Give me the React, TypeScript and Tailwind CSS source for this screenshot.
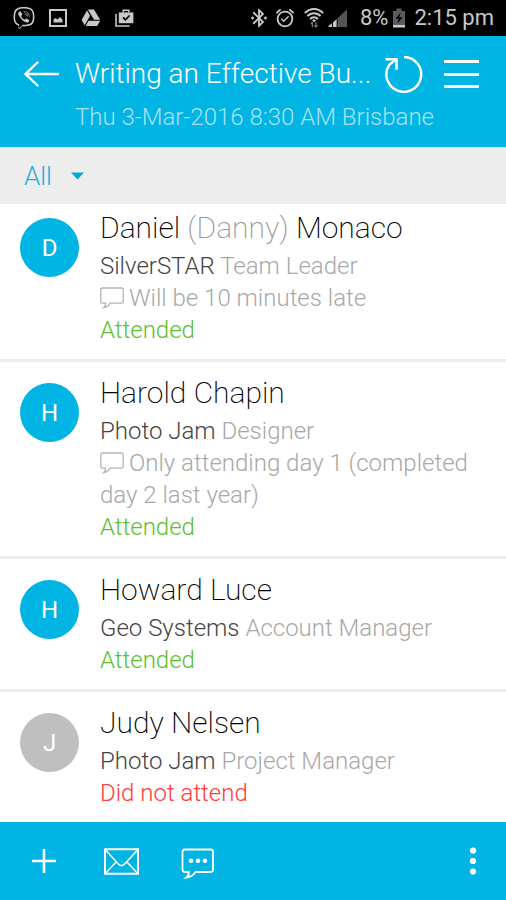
import React from 'react';
import { FaViber } from 'react-icons/fa';
import { MdAlarmOn, MdBluetoothConnected } from 'react-icons/md';

interface Attendee {
  first: string;
  nickname?: string;
  last: string;
  company: string;
  role: string;
  note?: string;
  attended: boolean;
}

const attendees: Attendee[] = [
  {
    first: 'Daniel',
    nickname: 'Danny',
    last: 'Monaco',
    company: 'SilverSTAR',
    role: 'Team Leader',
    note: 'Will be 10 minutes late',
    attended: true,
  },
  {
    first: 'Harold',
    last: 'Chapin',
    company: 'Photo Jam',
    role: 'Designer',
    note: 'Only attending day 1 (completed day 2 last year)',
    attended: true,
  },
  { first: 'Howard', last: 'Luce', company: 'Geo Systems', role: 'Account Manager', attended: true },
  { first: 'Judy', last: 'Nelsen', company: 'Photo Jam', role: 'Project Manager', attended: false },
];

const PictureIcon = () => (
  <svg width="18" height="18" viewBox="0 0 18 18" fill="none">
    <path d="M1 1h16v16H1z" stroke="currentColor" strokeWidth="2" />
    <path d="M4.500 13.500v-3l2-1.500 2 1.500 2.500-2.500 2.500 2.500v3z" fill="currentColor" />
  </svg>
);

const DriveIcon = () => (
  <svg width="20" height="18" viewBox="0 0 20 18" fill="currentColor">
    <path d="M6.8 0.5h6.2l6.2 10.3h-6.1z" />
    <path d="M6 1.6l3.1 5.2-5.4 9.4L0.6 11z" />
    <path d="M7.6 11.8h11.6l-3 5.2H4.6z" />
  </svg>
);

const BagIcon = () => (
  <svg width="19" height="18" viewBox="0 0 19 18" fill="none">
    <path d="M1 5v12h13.5" stroke="currentColor" strokeWidth="1.6" />
    <path d="M8.2 3.5V1.2h5.6v2.3" stroke="currentColor" strokeWidth="1.5" />
    <path d="M3.8 3.4h14.6v10.8H3.8z" fill="currentColor" />
    <path d="M8 8.4l2.4 2.4 4.2-4.3" stroke="#000" strokeWidth="1.7" />
  </svg>
);

const WifiIcon = () => (
  <svg width="20" height="20" viewBox="0 0 20 20" fill="none">
    <g stroke="#c8c8c8" strokeWidth="1.9">
      <path d="M0.8 5.2C6-0.4 14-0.4 19.2 5.2" />
      <path d="M3.4 8.2c3.8-4 9.4-4 13.2 0" />
      <path d="M6 11c2.4-2.4 5.6-2.4 8 0" />
    </g>
    <path d="M8 12.2c1.2-1 2.8-1 4 0l-2 2.4z" fill="#c8c8c8" />
    <path d="M8.4 19v-4.6M6.8 16l1.6-1.8M12 14v4.8M10.4 17.2l1.6 1.8 1.6-1.8" stroke="#777" strokeWidth="1.2" />
  </svg>
);

const SignalIcon = () => (
  <svg width="20" height="19" viewBox="0 0 20 19">
    <path d="M9.5 9.3L19 0.5V18H9.5z" fill="#555" />
    <path d="M5 13.5l3.6-3.4V18H5z" fill="#c8c8c8" />
    <path d="M0.5 18v-1.2l3.4-2.6V18z" fill="#c8c8c8" />
  </svg>
);

const BatteryIcon = () => (
  <svg width="14" height="20" viewBox="0 0 14 20">
    <path d="M4.5 0.5h5V3H13v14H1V3h3.5z" fill="#5c5c5c" />
    <path d="M1 17h12v2.5H1z" fill="#c8c8c8" />
    <path d="M8.6 4.5L3.4 10.8h3.2L5.4 15.8l5.2-6.6H7.4z" fill="#000" />
  </svg>
);

const ArrowIcon = () => (
  <svg width="35" height="26" viewBox="0 0 35 26" fill="none" stroke="currentColor" strokeWidth="2.4" strokeLinecap="round">
    <path d="M34 13H2M13.5 1.5L1.5 13l12 11.5" />
  </svg>
);

const RefreshIcon = () => (
  <svg width="39" height="40" viewBox="0 0 39 40" fill="none" stroke="currentColor" strokeWidth="2.4">
    <path d="M19 3A17.4 17.4 0 1 1 4.5 10.5L11 5.5" />
    <path d="M0.5 5.3h11v10.4" strokeWidth="2.6" />
  </svg>
);

const MenuIcon = () => (
  <svg width="35" height="30" viewBox="0 0 35 30" stroke="currentColor" strokeWidth="3">
    <path d="M0 2.5h35M0 15.5h35M0 27.5h35" />
  </svg>
);

const NoteIcon = () => (
  <svg
    className="mr-[5px] inline-block align-[-3px]"
    width="24"
    height="22"
    viewBox="0 0 24 22"
    fill="none"
    stroke="#b4b4b4"
    strokeWidth="1.3"
  >
    <path d="M2.6 1h18.8q1.8 0 1.8 1.8v11.6q0 1.8-1.8 1.8H10.2c-1.4 2.4-3.4 4-6.4 4.4 1.4-1.2 1.9-2.6 1.8-4.4h-3q-1.8 0-1.8-1.8V2.8Q0.8 1 2.6 1z" />
  </svg>
);

const PlusIcon = () => (
  <svg width="24" height="24" viewBox="0 0 24 24" stroke="currentColor" strokeWidth="2.6">
    <path d="M12 0v24M0 12h24" />
  </svg>
);

const MailIcon = () => (
  <svg width="35" height="27" viewBox="0 0 35 27" fill="none" stroke="currentColor" strokeWidth="2">
    <path d="M1 1.2h33v24.6H1z" />
    <path d="M1.5 2l13.3 14.4q2.7 2.4 5.4 0L33.5 2M1.5 25.2l10.8-11.5M33.5 25.2L22.7 13.7" strokeWidth="1.5" />
  </svg>
);

const ChatIcon = () => (
  <svg width="33" height="31" viewBox="0 0 33 31" fill="none">
    <path
      d="M4 1.5h25.5q2.500 0 2.500 2.500v17.500q0 2.500-2.500 2.500H14.500c-2 3.200-5 5-9.300 5.600 2-1.600 2.800-3.400 2.600-5.600H4q-2.500 0-2.500-2.500V4Q1.500 1.500 4 1.500z"
      stroke="currentColor"
      strokeWidth="1.8"
    />
    <g fill="currentColor">
      <circle cx="10" cy="12.8" r="2.3" />
      <circle cx="17" cy="12.8" r="2.3" />
      <circle cx="24" cy="12.8" r="2.3" />
    </g>
  </svg>
);

const MoreIcon = () => (
  <svg width="8" height="28" viewBox="0 0 8 28" fill="currentColor">
    <circle cx="4" cy="3.5" r="3.1" />
    <circle cx="4" cy="14" r="3.1" />
    <circle cx="4" cy="24.5" r="3.1" />
  </svg>
);

const StatusBar = () => (
  <div className="flex h-9 items-center justify-between bg-black pl-[13px] pr-3 text-[#c8c8c8]">
    <div className="flex items-center gap-[14px]">
      <FaViber size={22} />
      <PictureIcon />
      <DriveIcon />
      <BagIcon />
    </div>
    <div className="flex items-center">
      <MdBluetoothConnected size={22} />
      <MdAlarmOn size={22} className="ml-1" />
      <span className="ml-2"><WifiIcon /></span>
      <span className="ml-1"><SignalIcon /></span>
      <span className="ml-3 text-[22px] leading-8">8%</span>
      <span className="ml-1"><BatteryIcon /></span>
      <span className="ml-2 text-[22px] leading-8">2:15 pm</span>
    </div>
  </div>
);

const Header = () => (
  <header className="bg-[#00b4e4] pb-[14px] pl-6 pr-[27px] pt-[18px] text-white">
    <div className="flex h-10 items-center">
      <button type="button" aria-label="Back"><ArrowIcon /></button>
      <h1 className="ml-4 min-w-0 flex-1 whitespace-nowrap text-[28px] font-light leading-10">
        Writing an Effective Bu...
      </h1>
      <button type="button" aria-label="Refresh" className="ml-2"><RefreshIcon /></button>
      <button type="button" aria-label="Menu" className="ml-5"><MenuIcon /></button>
    </div>
    <p className="ml-[51px] mt-[7px] text-[24px] font-light leading-8 text-[#a6e3f6]">
      Thu 3-Mar-2016 8:30 AM Brisbane
    </p>
  </header>
);

const Filter = () => (
  <div className="flex h-[57px] items-center bg-[#ededed] pl-6">
    <div className="relative">
      <select
        aria-label="Filter attendees"
        className="w-[64px] appearance-none bg-transparent text-[26px] font-light leading-10 text-[#1fb0dc] outline-none"
      >
        <option>All</option>
        <option>Attended</option>
        <option>Did not attend</option>
      </select>
      <svg className="pointer-events-none absolute right-1 top-4" width="13" height="8" viewBox="0 0 13 8">
        <path d="M0 0.5h13L6.5 7.5z" fill="#00a9d8" />
      </svg>
    </div>
  </div>
);

const AttendeeRow: React.FC<{ person: Attendee }> = ({ person }) => (
  <li className="flex border-b-[3px] border-[#ededed] pb-[13px] pl-5 pr-6 pt-[11px] first:pt-1 last:border-b-0">
    <div
      className={`mt-[10px] flex h-[59px] w-[59px] shrink-0 items-center justify-center rounded-full text-[24px] text-white ${
        person.attended ? 'bg-[#00b4e4]' : 'bg-[#bfbfbf]'
      }`}
    >
      {person.first[0]}
    </div>
    <div className="ml-[21px] min-w-0 flex-1 text-[24px] font-light leading-8 text-[#a8a8a8]">
      <h2 className="text-[30px] font-extralight leading-10 text-black">
        {person.first} {person.nickname && <span className="text-[#999]">({person.nickname}) </span>}
        {person.last}
      </h2>
      <p className="mt-[2px]">
        <span className="text-[#444]">{person.company}</span> {person.role}
      </p>
      {person.note && (
        <p>
          <NoteIcon />
          {person.note}
        </p>
      )}
      <p className={person.attended ? 'text-[#5cc02a]' : 'text-[#ff3b3b]'}>
        {person.attended ? 'Attended' : 'Did not attend'}
      </p>
    </div>
  </li>
);

const Toolbar = () => (
  <footer className="flex h-[78px] items-center bg-[#00b4e4] pl-8 pr-[29px] text-white">
    <button type="button" aria-label="Add attendee"><PlusIcon /></button>
    <button type="button" aria-label="Email attendees" className="ml-12"><MailIcon /></button>
    <button type="button" aria-label="Message attendees" className="ml-[42px] pt-1"><ChatIcon /></button>
    <button type="button" aria-label="More" className="ml-auto"><MoreIcon /></button>
  </footer>
);

export default function App() {
  return (
    <div className="flex min-h-screen flex-col bg-white font-['Roboto','Liberation_Sans',sans-serif]">
      <StatusBar />
      <Header />
      <Filter />
      <ul className="flex-1">
        {attendees.map((person) => (
          <AttendeeRow key={person.first} person={person} />
        ))}
      </ul>
      <Toolbar />
    </div>
  );
}
